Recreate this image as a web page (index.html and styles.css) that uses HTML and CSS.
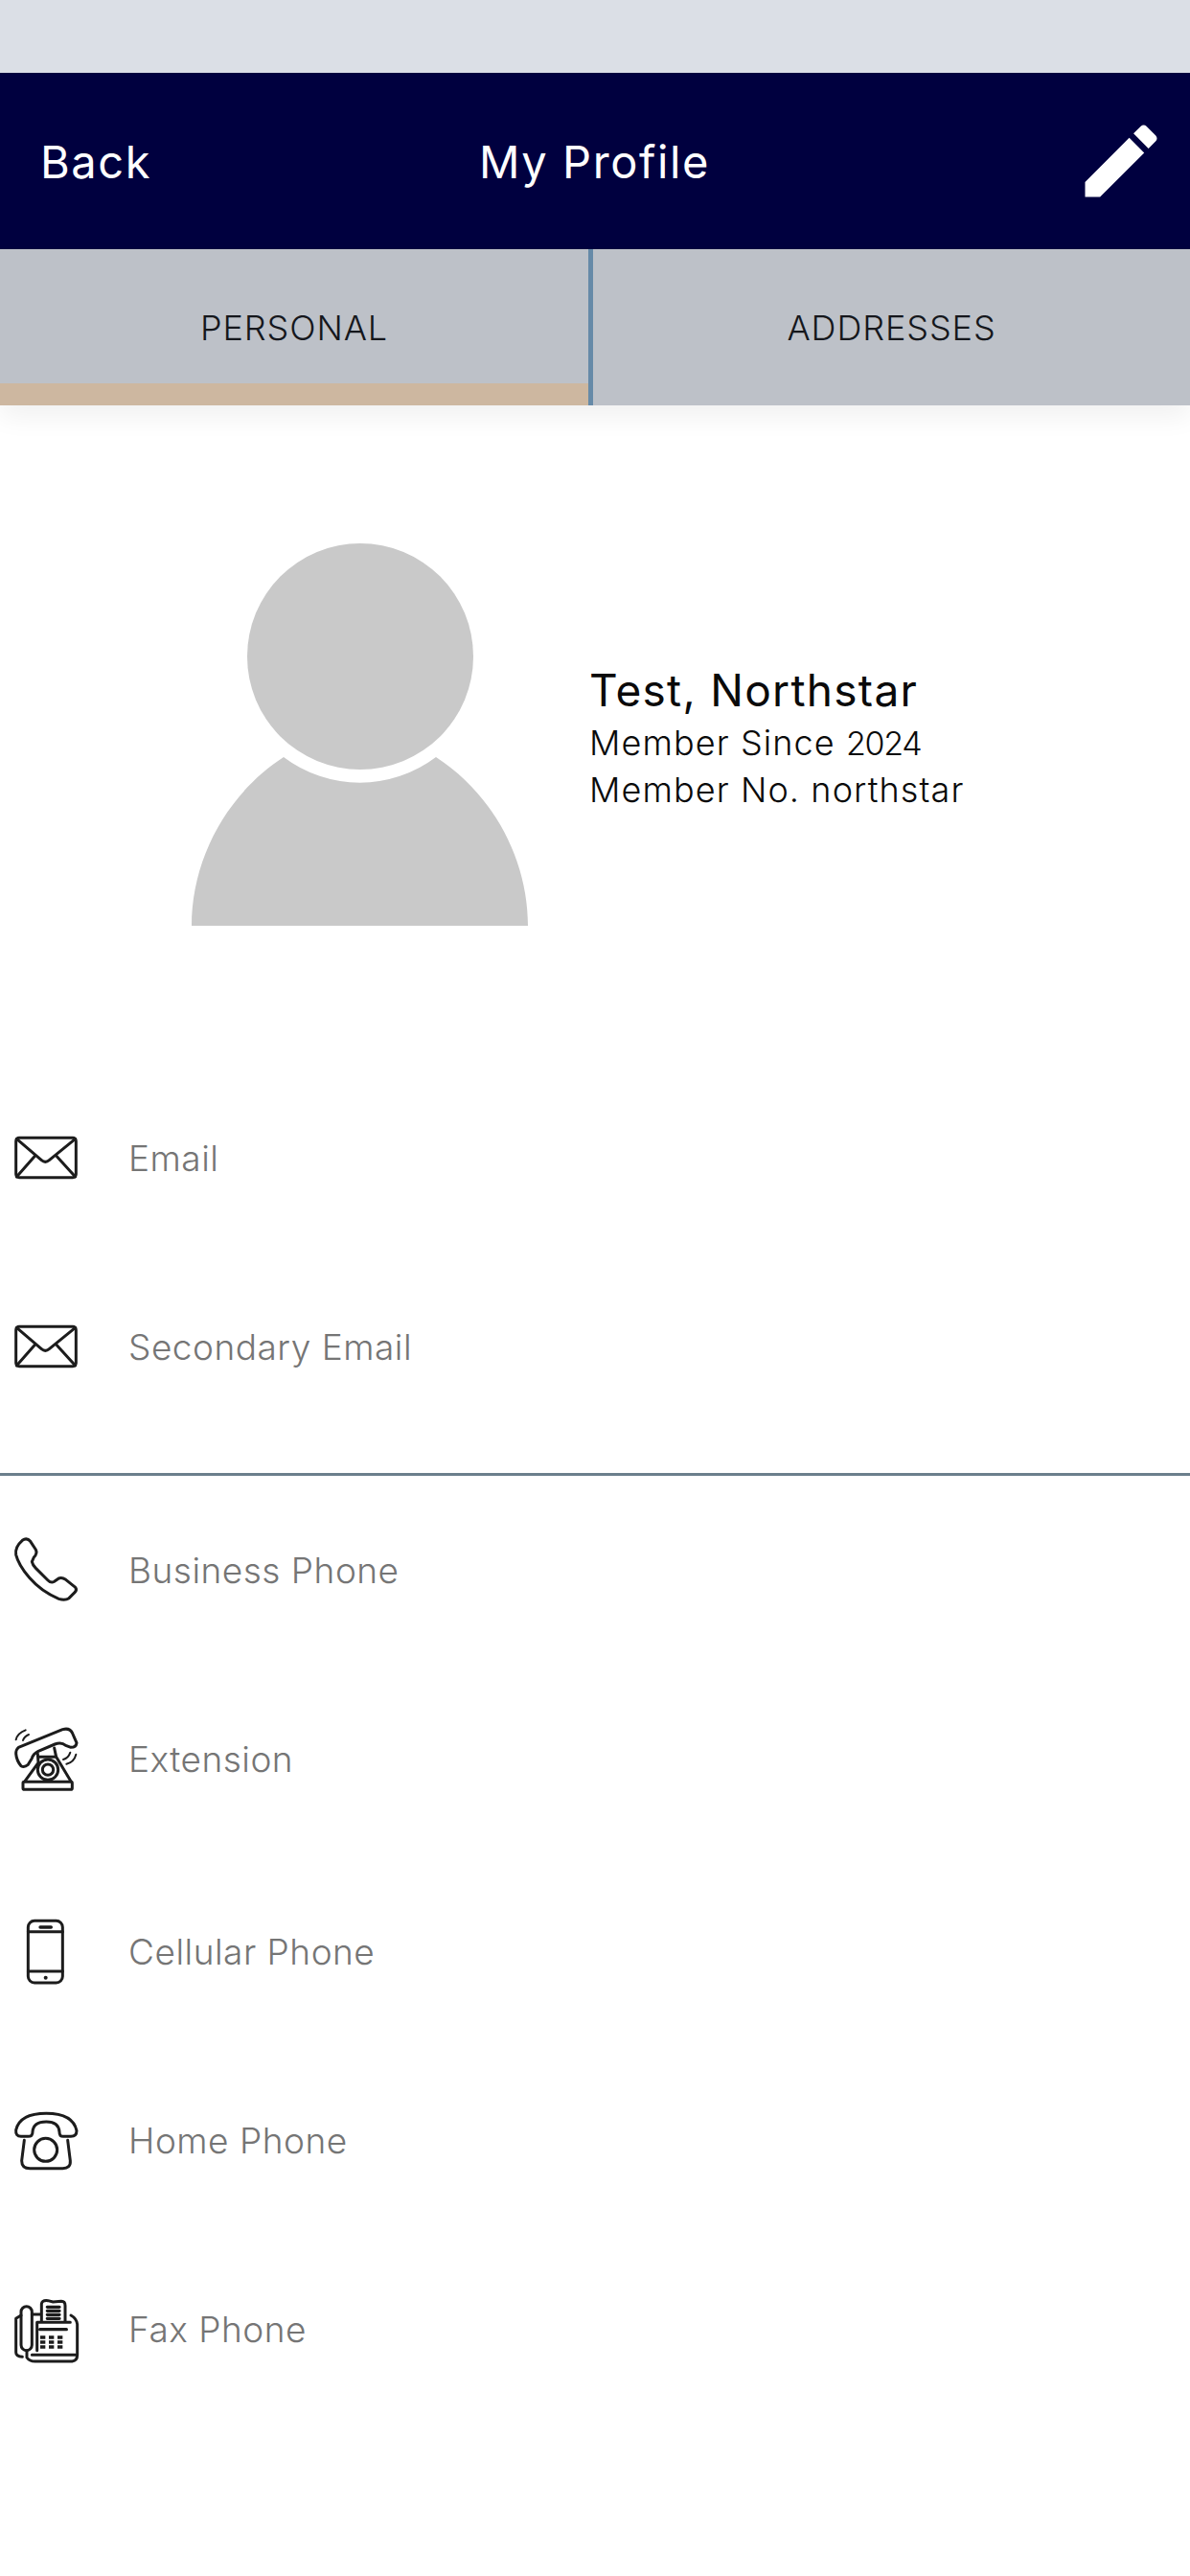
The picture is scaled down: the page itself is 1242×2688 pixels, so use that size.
FILE: index.html
```html
<!DOCTYPE html>
<html lang="en">
<head>
<meta charset="utf-8">
<title>My Profile</title>
<link rel="stylesheet" href="styles.css">
</head>
<body>
<div class="status"></div>
<header class="bar">
  <span class="back">Back</span>
  <span class="title">My Profile</span>
  <svg class="edit" viewBox="0 0 24 24"><path d="M3 17.25V21h3.75L17.81 9.94l-3.75-3.75L3 17.25zM20.71 7.04c.39-.39.39-1.02 0-1.41l-2.34-2.34c-.39-.39-1.02-.39-1.41 0l-1.83 1.83 3.75 3.75 1.83-1.83z"/></svg>
</header>
<nav class="tabs">
  <div class="tab tab-active">PERSONAL</div>
  <div class="tab">ADDRESSES</div>
</nav>
<section class="profile">
  <svg class="avatar" viewBox="0 0 351 399">
    <circle cx="176" cy="118" r="118"/>
    <path d="M96 223A132 132 0 0 0 255 223C315 262 351 330 351 399H0C0 330 36 262 96 223Z"/>
  </svg>
  <div class="who">
    <div class="name">Test, Northstar</div>
    <div class="meta">Member Since <span class="year">2024</span></div>
    <div class="meta">Member No. northstar</div>
  </div>
</section>
<section class="group group-email">
  <div class="row">
    <svg class="ico" viewBox="0 -24 360 330"><rect x="50" y="82" width="188" height="124" rx="10"/><path d="M52 85L130 152Q142 162 154 152L236 85M52 204L108 140M236 204L178 140"/></svg>
    <span class="label">Email</span>
  </div>
  <div class="row">
    <svg class="ico" viewBox="0 -24 360 330"><rect x="50" y="82" width="188" height="124" rx="10"/><path d="M52 85L130 152Q142 162 154 152L236 85M52 204L108 140M236 204L178 140"/></svg>
    <span class="label">Secondary Email</span>
  </div>
</section>
<section class="group group-phone">
  <div class="row">
    <svg class="ico" viewBox="0 -21 360 330"><path d="M70 55Q84 45 95 58L112 84Q118 96 106 108L100 122Q102 132 112 142L150 180Q160 190 170 184L184 174Q194 170 206 178L236 202Q242 210 234 218L216 236Q204 244 184 238Q130 216 92 172Q58 132 50 100Q46 76 70 55Z"/></svg>
    <span class="label">Business Phone</span>
  </div>
  <div class="row">
    <svg class="ico" viewBox="0 -3 360 330"><path d="M58 130L196 74Q218 68 226 84L240 116Q238 130 222 130L206 124Q192 112 172 120L120 142Q104 150 100 164L88 184Q76 194 66 188Q52 172 50 150Q50 136 58 130Z"/><path d="M118 150L120 178L78 236M170 132L176 160L222 236M120 160H172"/><rect x="72" y="238" width="154" height="24" rx="4"/><circle cx="150" cy="200" r="32"/><circle cx="150" cy="200" r="17"/><path class="thin" d="M50 106Q54 86 80 76M72 108Q76 96 90 90M198 168Q214 164 220 146M208 182Q232 176 238 152"/></svg>
    <span class="label">Extension</span>
  </div>
  <div class="row row-tall">
    <svg class="ico" viewBox="0 -15 360 330"><rect x="88" y="58" width="108" height="194" rx="20"/><path d="M88 92H196M88 216H196"/><path class="bold" d="M126 78H160"/><circle class="dot" cx="143" cy="236" r="6"/></svg>
    <span class="label">Cellular Phone</span>
  </div>
  <div class="row">
    <svg class="ico" viewBox="0 -9 360 330"><path d="M50 128Q62 76 145 76Q228 76 240 130Q240 148 222 148H198Q186 148 186 134Q184 102 145 102Q104 102 102 134Q102 148 88 148H66Q48 148 50 128Z"/><path d="M76 160L68 224Q68 248 94 248H196Q222 248 220 224L212 160"/><circle cx="143" cy="190" r="36"/></svg>
    <span class="label">Home Phone</span>
  </div>
  <div class="row">
    <svg class="ico" viewBox="0 -18 360 330"><rect x="66" y="80" width="34" height="138" rx="17"/><path d="M66 108L50 118V224Q50 236 70 238M84 218V240Q92 252 110 252H226Q242 250 242 232V136Q240 118 222 108M100 105H130M130 130V72Q132 60 150 62L166 66L192 64Q204 64 204 78V130M116 130H220M100 232H236M116 130V218"/><path class="bold" d="M125 152H208M148 82H186M148 94H186M148 106H186M148 118H186"/><path class="keys" d="M126 177H204M126 192H204M126 207H204"/></svg>
    <span class="label">Fax Phone</span>
  </div>
</section>
</body>
</html>
```
FILE: styles.css
```css
* { box-sizing: border-box; }
html, body { margin: 0; padding: 0; }
body {
  width: 1242px;
  height: 2688px;
  overflow: hidden;
  background: #fff;
  font-family: Inter, "Noto Sans", sans-serif;
}
.status { height: 76px; background: #dbdfe6; }
.bar {
  height: 184px;
  background: #00003f;
  color: #fff;
  display: grid;
  grid-template-columns: 1fr auto 1fr;
  align-items: center;
  padding: 0 22px 0 21px;
  font-size: 47px;
  letter-spacing: 1.6px;
}
.back { padding-left: 21px; }
.edit { width: 100px; height: 100px; fill: #fff; justify-self: end; }
.tabs {
  height: 163px;
  display: flex;
  background: #bdc1c8;
  box-shadow: 0 12px 26px rgba(0, 0, 0, .06);
  position: relative;
}
.tab {
  flex: 1;
  display: flex;
  align-items: center;
  justify-content: center;
  color: #15171c;
  font-size: 36px;
  font-weight: 300;
  letter-spacing: .9px;
}
.tab-active {
  flex: 0 0 619px;
  border-right: 5px solid #668aa8;
  box-shadow: inset 0 -23px 0 #cdb7a0;
}
.profile {
  height: 685px;
  padding: 144px 0 0 200px;
  display: flex;
  gap: 64px;
}
.avatar { width: 351px; height: 399px; fill: #c9c9c9; flex: none; }
.who { padding-top: 123px; color: #0a0a0a; }
.name { font-size: 46px; font-weight: 400; line-height: 60px; letter-spacing: 1.3px; }
.meta { font-size: 36px; font-weight: 300; line-height: 49px; letter-spacing: 1.1px; padding-top: 1px; margin-bottom: -1px; }
.year { font-size: 34px; letter-spacing: -1.3px; }
.group-email { border-bottom: 3px solid #6b7f8c; padding-bottom: 35px; }
.group-phone { margin-top: -2px; }
.row {
  height: 197px;
  display: flex;
  align-items: center;
  gap: 14px;
}
.row-tall { margin-top: 4px; }
.ico {
  width: 120px;
  height: 110px;
  flex: none;
  fill: none;
  stroke: #1c1c1c;
  stroke-width: 9;
  stroke-linejoin: round;
  stroke-linecap: round;
}
.ico .thin { stroke-width: 6; }
.ico .bold { stroke-width: 10; }
.ico .dot { fill: #1c1c1c; stroke: none; }
.ico .keys { stroke-width: 11; stroke-dasharray: 16 11; stroke-linecap: butt; }
.label {
  padding-top: 3px;
  font-size: 37px;
  font-weight: 300;
  color: #757575;
  letter-spacing: .5px;
}
```
